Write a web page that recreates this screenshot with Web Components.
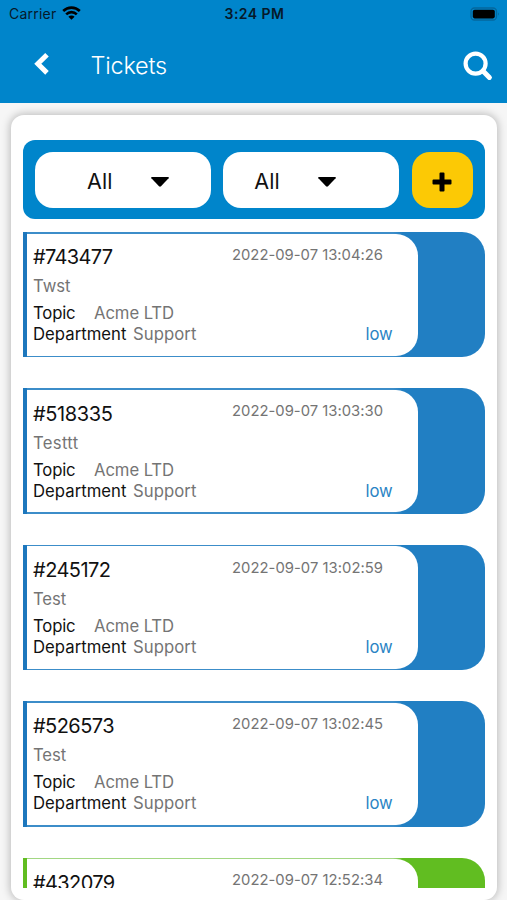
<!DOCTYPE html>
<html lang="en">
<head>
<meta charset="utf-8">
<title>Tickets</title>
<style>
html,body{margin:0;height:100%;overflow:hidden}
body{font-family:Inter,"Liberation Sans",sans-serif;background:#f6f6f6;color:#111}
</style>
</head>
<body>
<tickets-app></tickets-app>
<script>
function define(name, html, setup) {
  customElements.define(name, class extends HTMLElement {
    connectedCallback() {
      if (this.shadowRoot) return;
      const root = this.attachShadow({ mode: 'open' });
      root.innerHTML = html;
      if (setup) setup(this, root);
    }
  });
}

// Text run whose tracking is adjusted to a given advance width.
define('fit-text', `<style>:host{display:inline-block;white-space:nowrap}</style><span><slot></slot></span>`, (el, root) => {
  const span = root.querySelector('span');
  const w = parseFloat(el.getAttribute('w'));
  const natural = span.getBoundingClientRect().width;
  el.style.width = w + 'px';
  el.style.letterSpacing = ((w - natural) / el.textContent.length).toFixed(3) + 'px';
});

define('status-bar', `<style>
:host{display:grid;grid-template-columns:1fr auto 1fr;align-items:center;height:28px;padding:0 7px 0 9px;color:#06192a;font-size:14px;line-height:28px}
.l{display:flex;align-items:center;gap:5px}.l svg{margin-top:-2px}.time{font-weight:600;font-size:14px}
.r{justify-self:end;margin-top:-1px}svg{display:block}
</style>
<div class="l"><fit-text w="47.5">Carrier</fit-text>
<svg width="19" height="15" viewBox="0 0 19 15"><g fill="none" stroke="#000" stroke-width="2.6"><path d="M1.2 5a11.8 11.8 0 0 1 16.6 0"/><path d="M4.2 8.3a7.500 7.500 0 0 1 10.600 0"/></g><path d="M9.500 13.700L6.400 10.700a4.400 4.400 0 0 1 6.200 0z"/></svg></div>
<fit-text class="time" w="60">3:24 PM</fit-text>
<svg class="r" width="30" height="14" viewBox="0 0 30 14"><rect x="1" y="1" width="25.500" height="12" rx="3.500" fill="none" stroke="#04679d" stroke-width="1.300"/><rect x="2.800" y="2.800" width="22" height="8.600" rx="1.800"/><path d="M28 5.200q1.600 1.800 0 3.600z" fill="#04608f"/></svg>`);

define('nav-bar', `<style>
:host{display:flex;align-items:center;height:75px;padding:0 14px 0 34px;box-sizing:border-box;color:#fff}
svg{display:block;flex:none}.b{margin-top:-3px}.t{margin-left:40.5px;font-size:23.5px;font-weight:350;line-height:75px}
.s{margin-left:auto}
</style>
<svg class="b" width="16" height="24" viewBox="0 0 16 24"><path d="M13 2.700L3.800 11.800L13 20.900" fill="none" stroke="#fff" stroke-width="5"/></svg>
<fit-text class="t" w="76.5">Tickets</fit-text>
<svg class="s" width="30" height="30" viewBox="0 0 30 30"><g fill="none" stroke="#fff"><circle cx="12.600" cy="12.600" r="10" stroke-width="4.200"/><path d="M20 20L26.400 26.400" stroke-width="5" stroke-linecap="round"/></g></svg>`);

define('filter-select', `<style>
:host{display:flex;align-items:center;box-sizing:border-box;width:176px;height:55.500px;border-radius:18px;background:#fff;font-size:21.5px;line-height:30px}
fit-text{margin-top:3px}
svg{margin-left:37px;margin-top:4px}
</style><fit-text w="25.5"></fit-text><svg width="20" height="12" viewBox="0 0 20 12"><path d="M2 1H18Q19.500 1 18.600 2.200L11 10.300Q10 11.200 9 10.300L1.400 2.200Q.500 1 2 1z"/></svg>`, (el, root) => {
  el.style.paddingLeft = el.getAttribute('inset') + 'px';
  const old = root.querySelector('fit-text');
  const t = document.createElement('fit-text');
  t.setAttribute('w', '25.5');
  t.textContent = el.getAttribute('label');
  old.replaceWith(t);
});

define('filter-bar', `<style>
:host{display:flex;gap:12.3px;box-sizing:border-box;height:79px;padding:12px;background:#0085cb;border-radius:12px}
.add{width:61px;height:55.500px;border-radius:18px;background:#fcc905;display:grid;place-items:center;padding-top:5px;box-sizing:border-box}
svg{display:block}
</style><filter-select inset="52" label="All"></filter-select><filter-select inset="31" label="All"></filter-select>
<div class="add"><svg width="20" height="20" viewBox="0 0 20 20"><path d="M8.500 1.500h3v7h7v3h-7v7h-3v-7h-7v-3h7z" stroke="#000" stroke-width="2" stroke-linejoin="round"/></svg></div>`);

define('ticket-list', `<style>:host{display:flex;flex-direction:column;gap:31px;flex:1;min-height:0;overflow:hidden}</style><slot></slot>`);

define('content-panel', `<style>
:host{display:flex;flex-direction:column;gap:13px;box-sizing:border-box;height:785px;margin:12px 10px 0 10.500px;padding:25px 12px 12.500px 12.500px;background:#fff;border-radius:13px;box-shadow:0 0 8px 1px rgba(0,0,0,.25)}
</style><slot></slot>`);

/* Ticket rows: id, id width, subject, subject width, timestamp, tone. */
const tickets = [
  ['#743477', 79.5, 'Twst', 37.5, '2022-09-07 13:04:26'],
  ['#518335', 79.5, 'Testtt', 45.5, '2022-09-07 13:03:30'],
  ['#245172', 77.5, 'Test', 33, '2022-09-07 13:02:59'],
  ['#526573', 81, 'Test', 33, '2022-09-07 13:02:45'],
  ['#432079', 81.5, '', 0, '2022-09-07 12:52:34', 'green']
];

customElements.define('ticket-item', class extends HTMLElement {
  connectedCallback() {
    if (this.shadowRoot) return;
    const [id, idW, name, nameW, date, tone] = tickets[+this.getAttribute('index')];
    const root = this.attachShadow({ mode: 'open' });
    const c = tone ? '--c:#61bd21;--side:#61bd21;--line:#a2d783' : '--c:#217fc3;--side:#1d77bd;--line:#3c8dc9';
    const details = name ? `
<div class="name"><fit-text w="${nameW}">${name}</fit-text></div>
<div class="pair topic"><fit-text class="k" w="42.5">Topic</fit-text><fit-text w="80">Acme LTD</fit-text></div>
<div class="row"><div class="pair dept"><fit-text class="k" w="93.5">Department</fit-text><fit-text w="63.5">Support</fit-text></div><fit-text class="low" w="27">low</fit-text></div>` : '';
    root.innerHTML = `<style>:host{display:block;flex:none;${c}}
.card{display:block;box-sizing:border-box;height:125.4px;padding:1.500px 67px 1.500px 3.500px;background:linear-gradient(90deg,var(--side) 3.500px,var(--line) 3.500px,var(--line) 370px,var(--c) 380px);border-radius:0 23px 23px 0}
.in{box-sizing:border-box;height:100%;background:#fff;border-radius:0 22px 22px 0;padding:11.800px 25.500px 0 6.500px;font-size:16.700px;line-height:21px;color:#747474}
.row,.pair{display:flex}.row{justify-content:space-between}
.id{font-size:20px;line-height:24px;color:#111}
.date{font-size:14.800px;line-height:24px;margin-top:-2.500px;margin-right:9.500px}
.name{margin:7px 0 6px;height:21px}
.topic{gap:18.500px}.dept{gap:6.500px}
.k{color:#111}.low{color:#2a84c4}</style>
<div class="card"><div class="in">
<div class="row"><fit-text class="id" w="${idW}">${id}</fit-text><fit-text class="date" w="151">${date}</fit-text></div>${details}
</div></div>`;
  }
});

define('tickets-app', `<style>:host{display:block;height:900px;overflow:hidden}header{background:#0085cb;height:103px}</style>
<header><status-bar></status-bar><nav-bar></nav-bar></header>
<content-panel><filter-bar></filter-bar><ticket-list>${tickets.map((_, i) => `<ticket-item index="${i}"></ticket-item>`).join('')}</ticket-list></content-panel>`);
</script>
</body>
</html>
